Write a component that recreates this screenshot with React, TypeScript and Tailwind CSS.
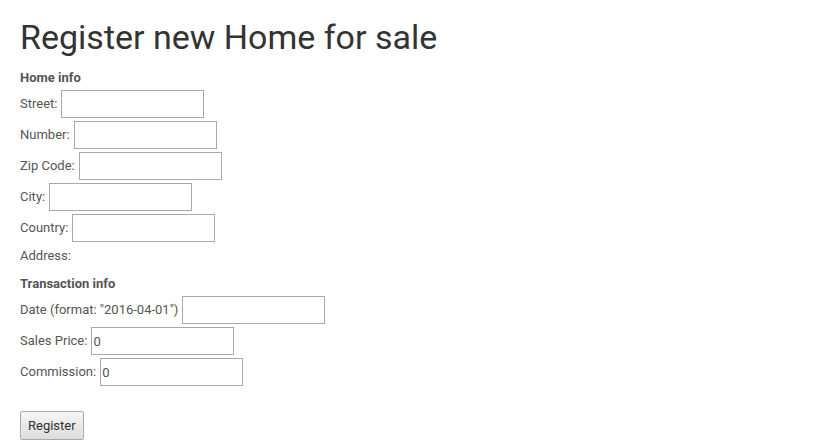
import React from "react";

function Row({ label, value }: { label: string; value?: string }) {
  return (
    <div className="flex items-center h-[28px] mb-[3px]">
      <span className="mr-[4px]">{label}</span>
      <input
        type="text"
        defaultValue={value}
        className="w-[143px] h-[28px] border border-[#a9a9a9] bg-white px-[1px] text-[13px] text-[#555] outline-none"
        style={{ fontFamily: "Roboto, sans-serif" }}
      />
    </div>
  );
}

export default function App() {
  return (
    <div
      className="min-h-[447px] bg-white pl-[20px] pt-[15px] text-[13px] text-[#555]"
      style={{ fontFamily: "Roboto, 'Liberation Sans', sans-serif" }}
    >
      <h1 className="text-[34px] leading-[44px] text-[#333] font-normal mb-[12px]">
        Register new Home for sale
      </h1>
      <div className="font-bold leading-[14px] mb-[5px]">Home info</div>
      <Row label="Street:" />
      <Row label="Number:" />
      <Row label="Zip Code:" />
      <Row label="City:" />
      <Row label="Country:" />
      <div className="h-[22px] flex items-center">Address:</div>
      <div className="font-bold leading-[14px] mt-[10px] mb-[5px]">Transaction info</div>
      <Row label={'Date (format: "2016-04-01")'} />
      <Row label="Sales Price:" value="0" />
      <Row label="Commission:" value="0" />
      <div className="mt-[25px]">
        <button className="h-[29px] px-[7px] border border-[#a9a9a9] rounded-[2px] bg-gradient-to-b from-[#f6f6f6] to-[#dcdcdc] text-[#333] text-[13px]">
          Register
        </button>
      </div>
    </div>
  );
}
